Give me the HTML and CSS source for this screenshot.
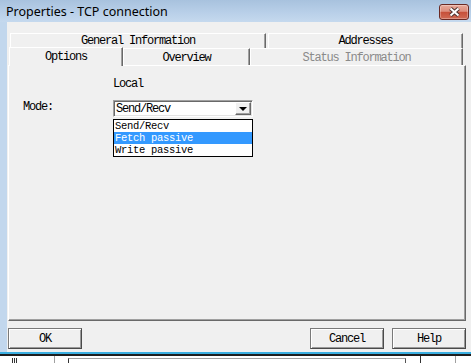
FILE: index.html
```html
<!DOCTYPE html>
<html lang="en">

<head>
  <meta charset="UTF-8">
  <title>Properties - TCP connection</title>
  <link rel="stylesheet" href="styles.css">
</head>

<body>
  <div class="window">
    <div class="titlebar">
      <span class="title">Properties - TCP connection</span>
      <button class="close" type="button">
        <svg width="13" height="10" viewBox="0 0 13 10">
          <path d="M2.5 1.5 L10.5 8.5 M10.5 1.5 L2.5 8.5" stroke="#4d3330" stroke-width="4" fill="none" />
          <path d="M2.5 1.5 L10.5 8.5 M10.5 1.5 L2.5 8.5" stroke="#fff" stroke-width="2" fill="none" />
        </svg>
      </button>
    </div>

    <div class="body">
      <div class="frame-left"></div>
      <div class="client">
        <!-- two rows of tabs, the front row holds the active one -->
        <div class="tab-row back">
          <div class="tab tab-general">General Information</div>
          <div class="tab tab-addresses">Addresses</div>
        </div>
        <div class="tab-row front">
          <div class="tab tab-options active">Options</div>
          <div class="tab tab-overview">Overview</div>
          <div class="tab tab-status disabled">Status Information</div>
        </div>

        <div class="panel">
          <div class="col-head">Local</div>
          <div class="field">
            <label>Mode:</label>
            <div class="combo-wrap">
              <div class="combo">
                <span>Send/Recv</span>
                <span class="arrow"></span>
              </div>
              <ul class="list">
                <li>Send/Recv</li>
                <li class="sel">Fetch passive</li>
                <li>Write passive</li>
              </ul>
            </div>
          </div>
        </div>

        <div class="buttons">
          <button class="btn btn-ok" type="button">OK</button>
          <div class="btn-group">
            <button class="btn" type="button">Cancel</button>
            <button class="btn" type="button">Help</button>
          </div>
        </div>
      </div>
    </div>

    <div class="frame-bottom"></div>
    <div class="frame-shadow"></div>
    <div class="desktop">
      <span class="ticks"></span>
      <span class="sep"></span>
      <span class="box"></span>
      <span class="box2"></span>
    </div>
  </div>
</body>

</html>
```

FILE: styles.css
```css
body {
  margin: 0;
  width: 471px;
  height: 363px;
  overflow: hidden;
  background: #fff;
  font-family: "Liberation Mono", monospace;
  font-size: 12px;
  letter-spacing: -1.2px;
  color: #000;
}

.window {
  display: flex;
  flex-direction: column;
  height: 363px;
}

/* 标题栏 */
.titlebar {
  height: 22px;
  flex: none;
  display: flex;
  justify-content: space-between;
  align-items: flex-start;
  padding: 0 2px 0 6px;
  background: linear-gradient(180deg, #a8c2de 0%, #b8cfe8 55%, #c5d9ee 100%);
}

.title {
  margin-top: 4px;
  font-family: "Noto Sans", "Liberation Sans", sans-serif;
  font-size: 12.5px;
  line-height: 15px;
  letter-spacing: 0;
}

.close {
  width: 30px;
  height: 16px;
  margin-top: 4px;
  padding: 0;
  display: flex;
  justify-content: center;
  align-items: center;
  border: 1px solid #6b2a24;
  border-radius: 3px;
  background: linear-gradient(180deg, #e8aa9c 0%, #dc8d7c 45%, #c6503a 52%, #d06a54 100%);
  box-shadow: inset 0 0 0 1px rgba(255, 255, 255, 0.3);
}

.body {
  display: flex;
  height: 330px;
  flex: none;
}

.frame-left {
  width: 7px;
  background: #c2d7ed;
}

.client {
  flex: 1;
  display: flex;
  flex-direction: column;
  padding: 11px 5px 0 0;
  background: #f0f0f0;
}

/* 选项卡 */
.tab-row {
  display: flex;
  align-items: flex-start;
}

.tab-row.back {
  height: 15px;
  margin-left: 3px;
  gap: 2px;
}

.tab-row.front {
  height: 17px;
  margin-left: 2px;
}

.tab {
  box-sizing: border-box;
  text-align: center;
  line-height: 12px;
  border-top: 1px solid #fff;
  border-left: 1px solid #fff;
  border-right: 1px solid #696969;
  box-shadow: inset -1px 0 #a0a0a0;
  background: #f0f0f0;
}

.back .tab {
  height: 15px;
  padding-top: 1px;
}

.front .tab {
  height: 17px;
  padding-top: 3px;
}

.tab-general {
  width: 256px;
}

.tab-addresses {
  width: 195px;
}

.tab-options {
  width: 114px;
}

.tab-overview {
  width: 127px;
}

.tab-status {
  width: 213px;
}

.front .tab.active {
  position: relative;
  z-index: 1;
  height: 19px;
  margin-top: -1px;
}

.tab.disabled {
  color: #8a8a8a;
}

/* 面板 */
.panel {
  box-sizing: border-box;
  width: 458px;
  height: 256px;
  margin-left: 1px;
  padding-top: 12px;
  border-top: 1px solid #fff;
  border-left: 1px solid #fff;
  border-right: 1px solid #696969;
  border-bottom: 1px solid #696969;
  box-shadow: inset -1px -1px #a0a0a0;
}

.col-head {
  margin-left: 104px;
  line-height: 12px;
}

.field {
  display: flex;
  margin-top: 10px;
}

.field label {
  width: 90px;
  margin-left: 14px;
  line-height: 12px;
  padding-top: 1px;
}

.combo-wrap {
  width: 140px;
}

.combo {
  box-sizing: border-box;
  height: 17px;
  display: flex;
  justify-content: space-between;
  align-items: center;
  padding-left: 2px;
  line-height: 12px;
  background: #fff;
  border-top: 1px solid #a0a0a0;
  border-left: 1px solid #a0a0a0;
  border-right: 1px solid #fff;
  border-bottom: 1px solid #fff;
  box-shadow: inset 1px 1px #696969, inset -1px -1px #e3e3e3;
}

.arrow {
  box-sizing: border-box;
  width: 16px;
  height: 13px;
  margin-right: 1px;
  display: flex;
  justify-content: center;
  align-items: center;
  background: #f0f0f0;
  border-top: 1px solid #fff;
  border-left: 1px solid #fff;
  border-right: 1px solid #696969;
  border-bottom: 1px solid #696969;
  box-shadow: inset -1px -1px #a0a0a0;
}

.arrow::after {
  content: "";
  border-left: 4px solid transparent;
  border-right: 4px solid transparent;
  border-top: 4px solid #000;
  margin-top: 1px;
}

.list {
  margin: 2px 0 0;
  padding: 0;
  list-style: none;
  border: 1px solid #000;
  background: #fff;
}

.list li {
  height: 12px;
  line-height: 12px;
  padding-left: 1px;
  font-size: 10.5px;
  letter-spacing: -0.3px;
}

.list li.sel {
  background: #3399ff;
  color: #fff;
}

/* 按钮 */
.buttons {
  display: flex;
  justify-content: space-between;
  margin-top: 7px;
}

.btn-group {
  display: flex;
  gap: 8px;
}

.btn {
  box-sizing: border-box;
  width: 74px;
  height: 21px;
  padding: 0;
  font-family: inherit;
  font-size: 12px;
  letter-spacing: -1.2px;
  color: #000;
  background: #f0f0f0;
  border: 1px solid #7a7a7a;
  border-right-color: #4a4a4a;
  border-bottom-color: #4a4a4a;
  box-shadow: inset 1px 1px #fff, inset -1px -1px #9a9a9a;
}

.btn-ok {
  margin-left: 1px;
}

/* 底部边框和下层窗口 */
.frame-bottom {
  height: 2px;
  background: #3aaee0;
}

.frame-shadow {
  height: 2px;
  background: #1e1e1e;
}

.desktop {
  flex: 1;
  display: flex;
  background: #fff;
}

.ticks {
  width: 5px;
  margin: 2px 0 0 12px;
  background: repeating-linear-gradient(90deg, #333 0 1px, transparent 1px 2px);
}

.sep {
  width: 1px;
  margin-left: 37px;
  background: #a0a0a0;
}

.box {
  box-sizing: border-box;
  width: 338px;
  margin: 2px 0 0 13px;
  border-left: 1px solid #333;
  border-right: 1px solid #555;
  border-top: 1px solid #a0a0a0;
}

.box2 {
  box-sizing: border-box;
  width: 36px;
  margin: 0 0 0 14px;
  border-left: 1px solid #333;
  border-right: 1px solid #a0a0a0;
}
```
